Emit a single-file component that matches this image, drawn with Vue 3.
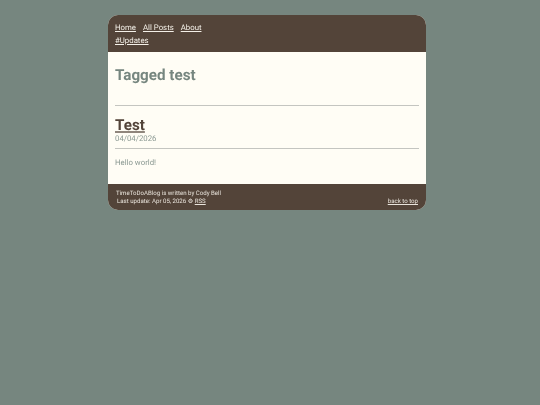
<script setup>
</script>

<template>
  <div class="page">
    <div class="wrap">
      <header class="head">
        <nav class="nav">
          <a href="#">Home</a>
          <a href="#">All Posts</a>
          <a href="#">About</a>
        </nav>
        <nav class="nav second">
          <a href="#">#Updates</a>
        </nav>
      </header>
      <main class="main">
        <h1 class="tagged">Tagged test</h1>
        <hr class="rule first" />
        <h2 class="title"><a href="#">Test</a></h2>
        <div class="date">04/04/2026</div>
        <hr class="rule" />
        <p class="body">Hello world!</p>
      </main>
      <footer class="foot">
        <div class="info">
          <div>TimeToDoABlog is written by Cody Bell</div>
          <div class="update">Last update: Apr 05, 2026 ⚙ <a href="#">RSS</a></div>
        </div>
        <a href="#" class="top">back to top</a>
      </footer>
    </div>
  </div>
</template>

<style>
html, body { margin: 0; background: #76867f; }
</style>

<style scoped>
.page {
  height: 405px;
  background: #76867f;
  font-family: Roboto, sans-serif;
  text-rendering: geometricPrecision;
  display: flex;
  justify-content: center;
  align-items: flex-start;
  padding: 15px 6px 0 0;
  box-sizing: border-box;
}
.wrap {
  width: 318px;
  border-radius: 10px;
  overflow: hidden;
  background: #fffdf5;
  filter: blur(0.3px);
}
.head {
  background: #534439;
  padding: 7px 7px 6px;
  height: 37px;
  box-sizing: border-box;
}
.nav { display: flex; gap: 7px; font-size: 7.8px; line-height: 12px; }
.second { margin-top: 1px; }
.nav a { color: #f4f0e8; }
.main { padding: 14px 7px 0; height: 132px; box-sizing: border-box; }
.tagged { margin: 0; font-size: 15.2px; line-height: 19px; font-weight: 700; color: #76867f; }
.rule { border: none; border-top: 1px solid #c4c5c0; margin: 0; }
.first { margin-top: 20px; }
.title { margin: 10px 0 0; font-size: 15.2px; line-height: 18px; font-weight: 700; }
.title a {
  color: #534439;
  text-decoration-color: #8f857c;
  text-decoration-thickness: 2px;
  text-underline-offset: 1px;
}
.date { font-size: 7.8px; line-height: 10px; color: #8a9892; margin-bottom: 4px; }
.body { margin: 9px 0 0; font-size: 7.8px; line-height: 10px; color: #8a9892; }
.foot {
  background: #534439;
  color: #e9e4dc;
  height: 26px;
  box-sizing: border-box;
  padding: 4px 8px;
  display: flex;
  justify-content: space-between;
  align-items: flex-end;
  font-size: 6.1px;
  line-height: 8px;
}
.update { padding-left: 1px; }
.foot a { color: #e9e4dc; }
</style>
